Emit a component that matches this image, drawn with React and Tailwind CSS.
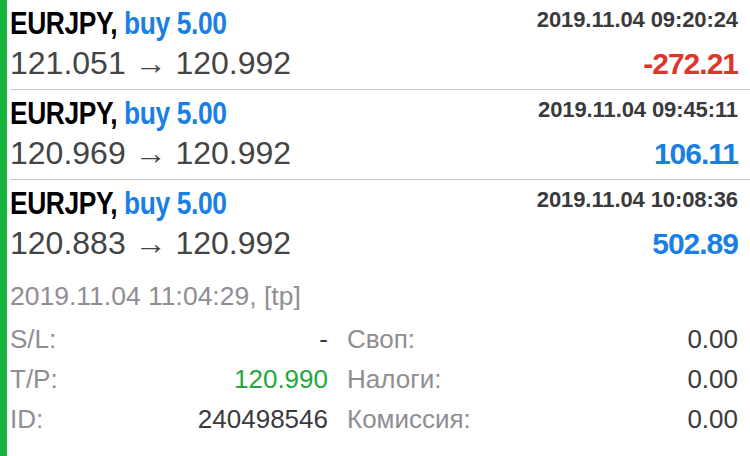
import React from "react";

// ================= DATA =================
const TRADES = [
  { symbol: "EURJPY", side: "buy 5.00", time: "2019.11.04 09:20:24", open: "121.051", close: "120.992", profit: "-272.21" },
  { symbol: "EURJPY", side: "buy 5.00", time: "2019.11.04 09:45:11", open: "120.969", close: "120.992", profit: "106.11" },
  { symbol: "EURJPY", side: "buy 5.00", time: "2019.11.04 10:08:36", open: "120.883", close: "120.992", profit: "502.89" },
];

const SANS = "font-['Liberation_Sans',Arial,sans-serif]";

// ================= ROW =================
const TradeRow = ({ t, last }) => {
  const neg = t.profit.startsWith("-");
  return (
    <div className={`pt-[3px] ${last ? "" : "pb-[5px] border-b border-[#c8c7cc]"} pr-[12px]`}>
      <div className="flex items-start justify-between">
        {/* condensed bold title */}
        <div className={`${SANS} font-bold text-[32px] leading-[40px] tracking-[-0.5px] whitespace-nowrap inline-block origin-left scale-x-[0.825]`}>
          <span className="text-black">{t.symbol},</span>{" "}
          <span className="text-[#1a7fe4]">{t.side}</span>
        </div>
        <div className={`${SANS} font-bold text-[22px] leading-[34px] tracking-[-0.1px] text-[#3a3a3c]`}>
          {t.time}
        </div>
      </div>
      <div className="flex items-baseline justify-between">
        <div className={`${SANS} text-[32px] leading-[40px] text-[#444]`}>
          {t.open} → {t.close}
        </div>
        <div className={`${SANS} font-bold text-[30px] leading-[40px] tracking-[-1px] ${neg ? "text-[#e0352b]" : "text-[#1a7fe4]"}`}>
          {t.profit}
        </div>
      </div>
    </div>
  );
};

// ================= APP =================
export default function App() {
  const details = [
    ["S/L:", "-", "", "Своп:", "0.00"],
    ["T/P:", "120.990", "text-[#22a93a]", "Налоги:", "0.00"],
    ["ID:", "240498546", "", "Комиссия:", "0.00"],
  ];

  return (
    <div className="w-[750px] h-[456px] bg-white flex overflow-hidden">
      <div className="w-[7px] bg-[#17b33c] shrink-0" />
      <div className="flex-1 pl-[3px]">
        {TRADES.map((t, i) => (
          <TradeRow key={i} t={t} last={i === TRADES.length - 1} />
        ))}

        {/* expanded details */}
        <div className={`${SANS} pr-[12px]`}>
          <div className="mt-[16px] text-[26.5px] leading-[32px] text-[#8e8e93]">
            2019.11.04 11:04:29, [tp]
          </div>
          <div className="mt-[7px] grid grid-cols-[318px_1fr] gap-x-[19px] text-[26px] leading-[40px]">
            {details.map(([l1, v1, c1, l2, v2]) => (
              <React.Fragment key={l1}>
                <div className="flex justify-between">
                  <span className="text-[#8e8e93]">{l1}</span>
                  <span className={c1 || "text-[#3a3a3c]"}>{v1}</span>
                </div>
                <div className="flex justify-between">
                  <span className="text-[#8e8e93]">{l2}</span>
                  <span className="text-[#3a3a3c]">{v2}</span>
                </div>
              </React.Fragment>
            ))}
          </div>
        </div>
      </div>
    </div>
  );
}
